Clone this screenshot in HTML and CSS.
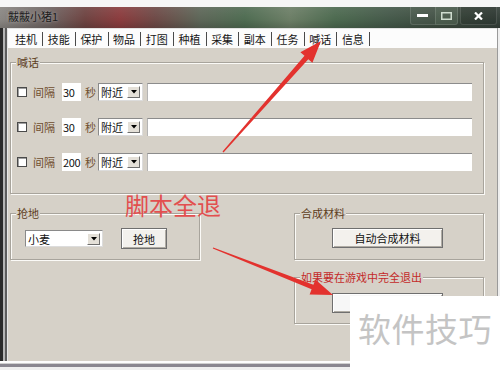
FILE: index.html
```html
<!DOCTYPE html>
<html lang="zh-CN">
<head>
<meta charset="utf-8">
<title>黻黻小猪1</title>
<link rel="stylesheet" href="styles.css">
</head>
<body>
<div class="topstrip"></div>
<div class="window">
  <div class="titlebar">
    <span class="title">黻黻小猪1</span>
    <div class="winbtns">
      <span class="wb wb-min"><svg width="12" height="4" viewBox="0 0 12 4"><rect x="0" y="0" width="11" height="3" fill="#fff"/></svg></span>
      <span class="wb wb-max"><svg width="11" height="8" viewBox="0 0 11 8"><rect x="0.75" y="0.75" width="9.5" height="6.5" fill="none" stroke="#cfdccf" stroke-width="1.5"/></svg></span>
      <span class="wb wb-close"><svg width="9" height="8" viewBox="0 0 9 8"><path d="M1 0.5 L8 7.5 M8 0.5 L1 7.5" stroke="#fff" stroke-width="2.2"/></svg></span>
    </div>
  </div>
  <div class="frame">
    <div class="frame-left"></div>
    <div class="client">
      <div class="tabs">
        <span class="tab">挂机</span>
        <span class="tab">技能</span>
        <span class="tab">保护</span>
        <span class="tab">物品</span>
        <span class="tab">打图</span>
        <span class="tab">种植</span>
        <span class="tab">采集</span>
        <span class="tab">副本</span>
        <span class="tab">任务</span>
        <span class="tab active">喊话</span>
        <span class="tab">信息</span>
      </div>
      <div class="panel">
        <fieldset class="group shout">
          <legend>喊话</legend>
          <div class="row">
            <span class="check"></span><span class="lbl">间隔</span><span class="num">30</span><span class="lbl sec">秒</span>
            <span class="combo"><span class="val">附近</span><span class="arrow"><svg width="6" height="4" viewBox="0 0 6 4"><path d="M0 0 H6 L3 3.5 Z" fill="#000"/></svg></span></span>
            <span class="field"></span>
          </div>
          <div class="row">
            <span class="check"></span><span class="lbl">间隔</span><span class="num">30</span><span class="lbl sec">秒</span>
            <span class="combo"><span class="val">附近</span><span class="arrow"><svg width="6" height="4" viewBox="0 0 6 4"><path d="M0 0 H6 L3 3.5 Z" fill="#000"/></svg></span></span>
            <span class="field"></span>
          </div>
          <div class="row">
            <span class="check"></span><span class="lbl">间隔</span><span class="num">200</span><span class="lbl sec">秒</span>
            <span class="combo"><span class="val">附近</span><span class="arrow"><svg width="6" height="4" viewBox="0 0 6 4"><path d="M0 0 H6 L3 3.5 Z" fill="#000"/></svg></span></span>
            <span class="field"></span>
          </div>
        </fieldset>
        <div class="lower">
          <fieldset class="group grab">
            <legend>抢地</legend>
            <div class="row grab-row">
              <span class="combo combo-wide"><span class="val">小麦</span><span class="arrow"><svg width="6" height="4" viewBox="0 0 6 4"><path d="M0 0 H6 L3 3.5 Z" fill="#000"/></svg></span></span>
              <span class="btn btn-grab">抢地</span>
            </div>
          </fieldset>
          <div class="rightcol">
            <fieldset class="group craft">
              <legend>合成材料</legend>
              <div class="row btn-row">
                <span class="btn btn-wide">自动合成材料</span>
              </div>
            </fieldset>
            <fieldset class="group quit">
              <legend>如果要在游戏中完全退出</legend>
              <div class="row btn-row">
                <span class="btn btn-wide btn-blank"></span>
              </div>
            </fieldset>
          </div>
        </div>
      </div>
    </div>
    <div class="frame-right"></div>
  </div>
  <div class="bottom"></div>
</div>
<div class="note">脚本全退</div>
<svg class="arrows" width="500" height="370" viewBox="0 0 500 370">
  <polygon fill="#e3322e" points="223.5,152.4 308.3,59.2 312.4,62.8 321,41 300.4,52.2 304.5,55.8 222.5,151.6"/>
  <polygon fill="#e3322e" points="212.8,248.6 311.6,289.3 309.6,294.4 333,295 315.4,279.6 313.4,284.7 213.2,247.4"/>
</svg>
<div class="watermark">软件技巧</div>
</body>
</html>
```
FILE: styles.css
```css
* { box-sizing: border-box; }
html, body { margin: 0; padding: 0; }
body {
  width: 500px;
  height: 370px;
  overflow: hidden;
  position: relative;
  background: #f2f2f2;
  font-family: "Noto Sans CJK SC", "Noto Sans", sans-serif;
  font-size: 11px;
  color: #111;
}
.topstrip { height: 7px; background: #f6f6f6; }

.titlebar {
  height: 21px;
  display: flex;
  align-items: flex-start;
  background:
    linear-gradient(180deg, rgba(255,255,255,0.08) 0, rgba(0,0,0,0) 60%, rgba(0,0,0,0.15) 100%),
    linear-gradient(90deg, #8a8783 0%, #6f6462 10%, #6e4442 17%, #8b3c3e 24%, #6e4a47 31%, #5d6658 40%, #4f6c52 49%, #6c7e66 58%, #4d6a50 67%, #45594a 78%, #3c4a3e 90%, #35403a 100%);
}
.title {
  padding-left: 8px;
  line-height: 19px;
  color: #1c1c1c;
  text-shadow: 0 0 3px rgba(200,200,200,0.7);
}
.winbtns {
  margin-left: auto;
  margin-right: 3px;
  display: flex;
  height: 18px;
}
.wb {
  height: 18px;
  display: flex;
  align-items: center;
  justify-content: center;
  border: 1px solid rgba(255,255,255,0.13);
  border-top: none;
  border-radius: 0 0 3px 3px;
  background: rgba(255,255,255,0.04);
}
.wb-min { width: 25px; border-right: none; border-radius: 0 0 0 3px; }
.wb-max { width: 23px; border-radius: 0 0 3px 0; background: rgba(170,200,170,0.14); }
.wb-close { width: 37px; margin-left: 2px; background: rgba(0,0,0,0.1); }

.frame { display: flex; height: 333px; }
.frame-left {
  width: 8px;
  background: linear-gradient(90deg, #2a2a2a 0 3px, #b4b4b4 3px 5px, #5c5c5c 5px 7px, #e6e6e6 7px 8px);
}
.frame-right {
  width: 3px;
  background: linear-gradient(90deg, #9a9a9a 0 1px, #efefef 1px);
}
.client { width: 489px; display: flex; flex-direction: column; }

.tabs {
  height: 20px;
  background: #fcfcfc;
  border-top: 1px solid #e2e2e2;
  display: flex;
  align-items: flex-start;
  padding: 3px 0 0 2.5px;
}
.tab {
  height: 14px;
  line-height: 14px;
  padding: 0 5.2px 0 4.5px;
  border-right: 1px solid #4a4a4a;
  color: #151515;
}

.panel {
  height: 313px;
  background: #d6d1c8;
  padding: 8px 13px 0 2px;
}

.group {
  margin: 0;
  min-width: 0;
  border: 1px solid #a8a49c;
  box-shadow: inset 1px 1px 0 #fbfaf7, 1px 1px 0 #fbfaf7;
}
.group legend {
  padding: 0 1px;
  line-height: 13px;
  color: #5e3e22;
  background: #d6d1c8;
}
.shout { padding: 14px 11px 22px 5px; }

.row { display: flex; align-items: center; height: 18px; }
.row + .row { margin-top: 17px; }
.shout .row { padding-left: 1px; }

.check {
  width: 10px;
  height: 10px;
  background: #fff;
  border: 1px solid #4a4a4a;
  box-shadow: inset 1px 1px 0 #a0a0a0;
  margin-right: 6px;
}
.lbl { color: #6f4d2c; margin-right: 7px; }
.lbl.sec { margin-right: 2px; }
.num {
  width: 19px;
  height: 18px;
  line-height: 18px;
  background: #fff;
  padding-left: 1px;
  margin-right: 4px;
  letter-spacing: -0.3px;
  color: #111;
}
.combo {
  width: 45px;
  height: 18px;
  display: flex;
  align-items: center;
  background: #fff;
  border: 1px solid #8a8a8a;
  border-right-color: #dcdcdc;
  border-bottom-color: #dcdcdc;
  margin-right: 4px;
}
.combo .val { flex: 1; padding-left: 2px; line-height: 16px; color: #111; }
.combo .arrow {
  width: 13px;
  height: 12px;
  margin-right: 2px;
  display: flex;
  align-items: center;
  justify-content: center;
  background: #e4e0d8;
  border: 1px solid;
  border-color: #fff #6e6e6e #6e6e6e #fff;
}
.field {
  flex: 1;
  height: 18px;
  background: #fff;
  border-top: 1px solid #8c8c8c;
  border-left: 1px solid #b4b4b4;
}

.lower {
  display: flex;
  justify-content: space-between;
  margin-top: 13px;
}
.grab { width: 190px; padding: 8px 5px 10px 5px; align-self: flex-start; }
.grab-row { height: 21px; margin-left: 9px; }
.combo-wide { width: 78px; height: 17px; margin-right: 18px; }

.btn {
  display: flex;
  align-items: center;
  justify-content: center;
  background: #f3f1ed;
  border: 1px solid #6f6f6f;
  box-shadow: inset 1px 1px 0 #fff, inset -1px -1px 0 #b0aca4;
  color: #111;
}
.btn-grab { width: 46px; height: 21px; }

.rightcol { width: 190px; display: flex; flex-direction: column; gap: 11px; }
.craft { padding: 8px 5px 11px 5px; }
.quit { padding: 9px 5px 10px 5px; }
.quit legend { color: #c42a2a; }
.btn-row { height: 20px; }
.btn-wide { width: 111px; height: 20px; margin-left: 32px; }
.btn-blank { background: #f7f7f7; }

.bottom {
  height: 9px;
  background: linear-gradient(180deg, #fdfdfd 0 2px, #d0d0d0 2px 3px, #8a8790 3px 6px, #efefef 6px);
}

.note {
  position: absolute;
  left: 125px;
  top: 191px;
  font-size: 24px;
  line-height: 28px;
  color: #e24f4f;
}
.arrows { position: absolute; left: 0; top: 0; pointer-events: none; }
.watermark {
  position: absolute;
  left: 350px;
  top: 296px;
  width: 150px;
  height: 74px;
  background: #fff;
  color: #c4c4c4;
  font-size: 33px;
  line-height: 40px;
  padding: 12px 0 0 8px;
  letter-spacing: 0.5px;
}
```
